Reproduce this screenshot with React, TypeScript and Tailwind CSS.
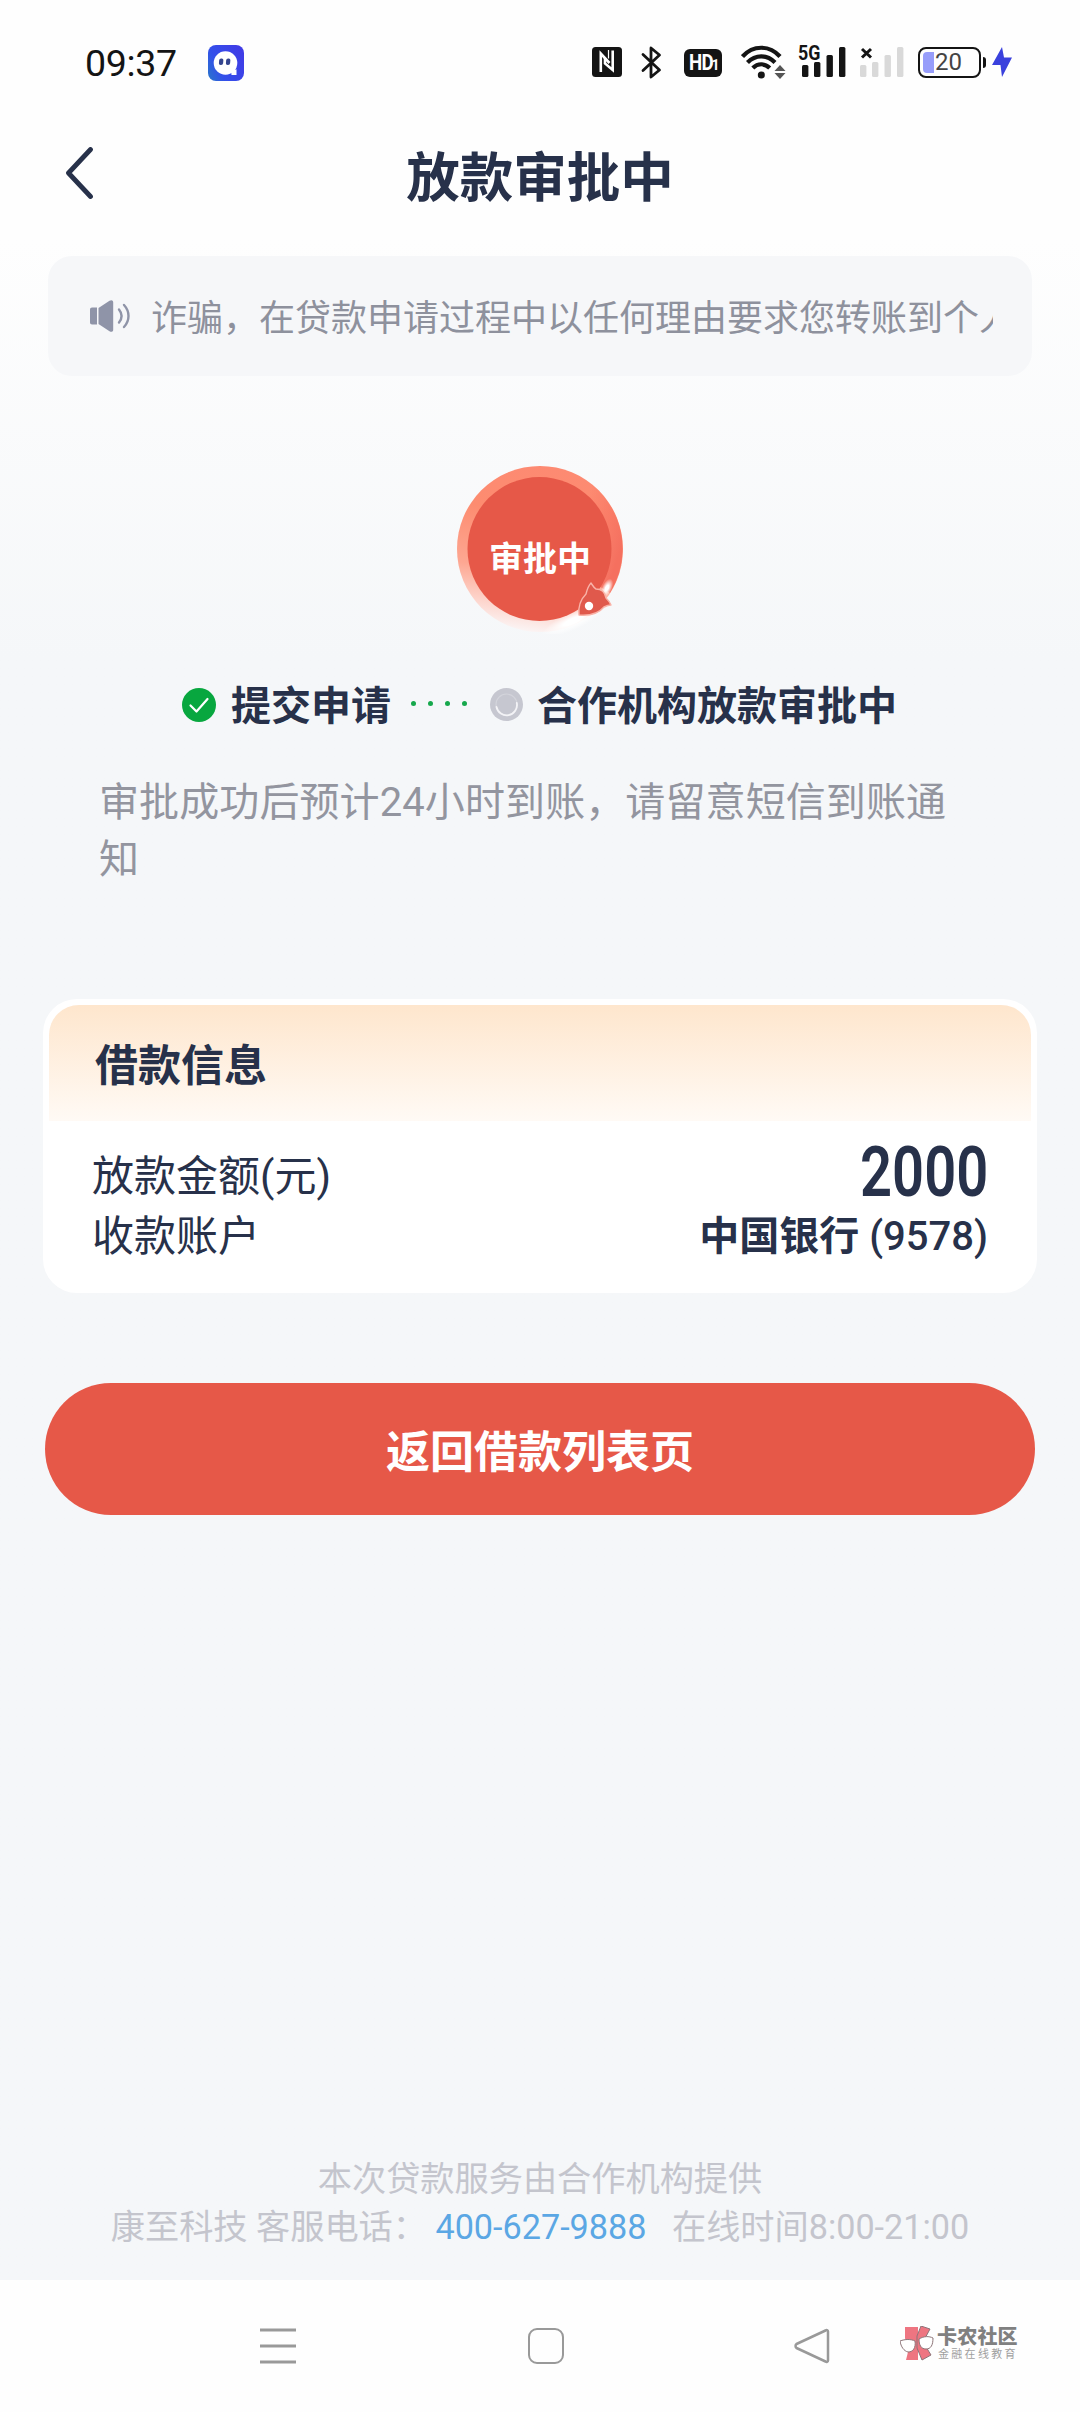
import type { ReactNode } from 'react';

const NOTICE = '诈骗，在贷款申请过程中以任何理由要求您转账到个人';

const SIGNAL_BARS = [
  { x: 0, y: 18, h: 12 },
  { x: 12, y: 15, h: 15 },
  { x: 24.5, y: 8, h: 22 },
  { x: 37, y: 0, h: 30 },
];

const STEP_DOTS = [0, 1, 2, 3];

function SignalBars({ color }: { color: string }) {
  return (
    <>
      {SIGNAL_BARS.map((bar) => (
        <rect key={bar.x} x={bar.x} y={bar.y} width="6.4" height={bar.h} rx="1.5" fill={color} />
      ))}
    </>
  );
}

function StatusBar() {
  return (
    <div className="flex h-[124px] shrink-0 items-center pl-[85px] text-[#141414]">
      <span className="w-[123px] pt-[2px] text-[37.500px] leading-[44px] tracking-[-0.3px]">09:37</span>
      <svg className="mt-[2px] h-9 w-9" viewBox="0 0 36 36">
        <defs>
          <linearGradient id="appIcon" x1="0" y1="0.8" x2="1" y2="0.3">
            <stop offset="0" stopColor="#2b6fd0" />
            <stop offset="0.3" stopColor="#3350ea" />
            <stop offset="1" stopColor="#403ce6" />
          </linearGradient>
        </defs>
        <rect width="36" height="36" rx="8" fill="url(#appIcon)" />
        <circle cx="17.500" cy="18" r="11.800" fill="#fff" />
        <path d="M23 25h3c1 0 1.500-.8 2.500-.8V30h-5z" fill="#fff" />
        <rect x="11" y="13.500" width="4.200" height="6.500" rx="1.800" fill="#35458f" transform="skewX(-5) translate(1.500 0)" />
        <rect x="18" y="13.500" width="4.200" height="6.500" rx="1.800" fill="#35458f" transform="skewX(-5) translate(1.500 0)" />
      </svg>

      {/* NFC */}
      <svg className="ml-[348px] h-[30px] w-[30px]" viewBox="0 0 30 30">
        <rect width="30" height="30" rx="3.500" fill="#141414" />
        <path d="M8.800 25V6.500L17.500 16" fill="none" stroke="#fff" strokeWidth="2.600" />
        <path d="M20.700 3.500V23L13 16.500V11" fill="none" stroke="#fff" strokeWidth="2.600" />
        <path d="M16.500 3v8.500" stroke="#fff" strokeWidth="1.200" />
      </svg>

      {/* bluetooth */}
      <svg className="ml-[19px] h-[33px] w-[21px]" viewBox="0 0 21 33" fill="none" stroke="#141414" strokeWidth="2.800" strokeLinejoin="round" strokeLinecap="round">
        <path d="M2 8.500L18.500 24L10 31V2L18.500 9L2 24.500" />
      </svg>

      <div className="mt-[2px] ml-[22px] flex h-7 w-[38px] items-baseline justify-center rounded-md bg-[#141414] text-white">
        <span className="text-[22px] leading-7 font-bold tracking-[-1px] [transform:scaleX(0.85)]">HD</span>
        <span className="-ml-[3px] text-[14px] leading-7 font-bold">1</span>
      </div>

      {/* wifi */}
      <svg className="ml-[19px] h-[34px] w-[45px]" viewBox="0 0 45 34">
        <g fill="none" stroke="#141414" strokeWidth="4.200">
          <path d="M1.500 11.500C12 -.2 28.500 -.2 39 11.500" />
          <path d="M6.500 17.500C14.500 9.300 26 9.300 34 17.500" />
          <path d="M11.800 23C16.800 18 23.700 18 28.700 23" />
        </g>
        <circle cx="20.300" cy="30" r="3.500" fill="#141414" />
        <path d="M39 20l5.500 6h-11z" fill="#555" />
        <path d="M39 34l5.500-6h-11z" fill="#555" />
      </svg>

      <div className="relative ml-[16px] h-[34px] w-[44px]">
        <svg className="absolute bottom-[2px] left-0 h-[30px] w-[44px]" viewBox="0 0 44 30">
          <SignalBars color="#141414" />
        </svg>
        <span className="absolute -top-[1px] -left-[4px] origin-left text-[21px] leading-[18px] font-bold [transform:scaleX(0.85)]">
          5G
        </span>
      </div>

      <svg className="ml-[14px] h-[30px] w-[44px]" viewBox="0 0 44 30">
        <SignalBars color="#d9d9d9" />
        <path d="M2 2l9 8.500M11 2l-9 8.500" stroke="#141414" strokeWidth="3" />
      </svg>

      <div className="ml-[14px] flex h-[31px] w-[63px] items-center rounded-[8px] border-[2.500px] border-[#141414] p-[3px]">
        <div className="h-full w-[11px] rounded-l-[4px] bg-[#979dfa]" />
        <span className="ml-[1px] text-[24px] leading-6 text-[#444]">20</span>
      </div>
      <div className="ml-[1.500px] h-[11px] w-[3px] rounded-r-sm bg-[#141414]" />
      <svg className="ml-[6px] h-[30px] w-5" viewBox="0 0 20 30">
        <path d="M10 0L0 18h8.500L10 30L20 10.500h-8z" fill="#3a41dd" />
      </svg>
    </div>
  );
}

function TitleBar() {
  return (
    <header className="flex h-[132px] shrink-0 justify-center text-[#27314a]">
      <svg className="mt-[23px] ml-[65px] h-[52px] w-[28px] shrink-0" viewBox="0 0 28 52" fill="none" stroke="#27314a" strokeWidth="4.800" strokeLinecap="round" strokeLinejoin="round">
        <path d="M25.500 2.500L3.500 26L25.500 49.500" />
      </svg>
      <h1 className="mt-[17px] mr-[93px] grow text-center text-[53.500px] leading-[76px] font-bold">放款审批中</h1>
    </header>
  );
}

function NoticeBar() {
  return (
    <div className="mx-12 flex h-[120px] shrink-0 items-center rounded-[24px] bg-[#f6f7f9] pr-[39px] pl-[42px]">
      <svg className="h-8 w-10 shrink-0" viewBox="0 0 40 32" fill="#8f94a8">
        <path d="M2 7.500h5v17H2c-1.200 0-2-.8-2-2v-13c0-1.200.8-2 2-2z" />
        <path d="M8.500 8L19.500.8c1.800-1.200 3.700-.6 3.700 1.500v27.400c0 2.100-1.900 2.700-3.700 1.500L8.500 24z" />
        <g fill="none" stroke="#8f94a8" strokeWidth="2.400" strokeLinecap="round">
          <path d="M29 9.500c3.200 4 3.200 9 0 13" />
          <path d="M34 5c6 6.500 6 15.500 0 22" />
        </g>
      </svg>
      <p className="ml-[21px] overflow-hidden pt-[6px] text-[36px] leading-[52px] whitespace-nowrap text-[#8e919d]">{NOTICE}</p>
    </div>
  );
}

function ApprovalBadge() {
  return (
    <div className="relative mt-[88px] h-[170px] w-[170px] shrink-0 self-center">
      <svg className="h-full w-full" viewBox="0 0 170 170">
        <defs>
          <linearGradient id="ring" x1="0.6" y1="0" x2="0.45" y2="1">
            <stop offset="0" stopColor="#fd8a72" />
            <stop offset="0.3" stopColor="#fd8c70" />
            <stop offset="0.65" stopColor="#fda792" />
            <stop offset="0.85" stopColor="#fdd3ca" />
            <stop offset="1" stopColor="#fbf4f4" />
          </linearGradient>
          <linearGradient id="ringRight" x1="0.2" y1="0.2" x2="1" y2="0.6">
            <stop offset="0.4" stopColor="#f86f5f" stopOpacity="0" />
            <stop offset="1" stopColor="#f5705f" />
          </linearGradient>
          <radialGradient id="glow">
            <stop offset="0.3" stopColor="#fff" />
            <stop offset="1" stopColor="#fff" stopOpacity="0" />
          </radialGradient>
        </defs>
        <circle cx="85" cy="85" r="83" fill="url(#ring)" />
        <path d="M85 2a83 83 0 0 1 70 127L85 85z" fill="url(#ringRight)" />
        <ellipse cx="118" cy="157" rx="34" ry="9" fill="url(#glow)" transform="rotate(-24 118 157)" />
        <circle cx="84.500" cy="85" r="72" fill="#e65848" />
        <ellipse cx="152" cy="124" rx="5" ry="10" fill="url(#glow)" transform="rotate(25 152 124)" />
        {/* rocket at the end of the ring */}
        <path
          d="M124 151c-1-9 1-15 7-21 1-4 2-8 5-11 2 3 3 5 5 6 5 0 9 3 10 9 2 2 4 4 5 7-3 0-5 1-7 2-5 6-13 9-25 8z"
          fill="#e0594c"
          stroke="#f9b3a8"
          strokeWidth="1.400"
          strokeLinejoin="round"
        />
        <circle cx="134" cy="142" r="4.200" fill="#fff" />
      </svg>
      <span className="absolute inset-x-0 top-[71px] text-center text-[34px] leading-[48px] font-bold text-white">审批中</span>
    </div>
  );
}

function Steps() {
  return (
    <div className="mt-[44px] ml-[182px] flex h-[58px] shrink-0 items-center text-[40px] leading-[58px] font-bold text-[#27314a]">
      <svg className="mb-[5px] h-[34px] w-[34px]" viewBox="0 0 34 34" fill="none">
        <circle cx="17" cy="17" r="17" fill="#08a73f" />
        <path d="M8.500 17.500l6 6L25.500 11" stroke="#fff" strokeWidth="2.200" strokeLinecap="round" strokeLinejoin="round" />
      </svg>
      <span className="ml-[15px]">提交申请</span>
      <span className="mb-[7px] ml-[20px] flex gap-3">
        {STEP_DOTS.map((dot) => (
          <i key={dot} className="h-[5px] w-[5px] rounded-full bg-[#16a84c]" />
        ))}
      </span>
      <svg className="mb-[5px] ml-[23px] h-[33px] w-[33px]" viewBox="0 0 33 33" fill="none">
        <circle cx="16.500" cy="16.500" r="16.500" fill="#c6c7d0" />
        <circle cx="16.500" cy="16.500" r="10.500" stroke="#d3d4db" strokeWidth="1.200" />
        <path d="M6.500 19a10.300 10.300 0 0 0 20.300-4" stroke="#f3f3f6" strokeWidth="1.800" strokeLinecap="round" />
      </svg>
      <span className="ml-[14px]">合作机构放款审批中</span>
    </div>
  );
}

function InfoRow({ label, children }: { label: string; children: ReactNode }) {
  return (
    <div className="flex h-[60px] items-center justify-between">
      <span className="text-[42px] leading-[60px]">{label}</span>
      {children}
    </div>
  );
}

function LoanCard() {
  return (
    <section className="mx-[43px] mt-[111px] h-[294px] shrink-0 rounded-[34px] bg-white p-[6px] text-[#27314a]">
      <h2 className="h-[116px] rounded-t-[30px] bg-linear-to-b from-[#fee6cd] to-[#fffaf5] pt-[31px] pl-[46px] text-[43px] leading-[60px] font-bold">
        借款信息
      </h2>
      <div className="pt-[26px] pr-[43px] pl-[43px]">
        <InfoRow label="放款金额(元)">
          <span className="mb-[10px] origin-right text-[71px] leading-[50px] font-semibold [transform:scaleX(0.79)]">2000</span>
        </InfoRow>
        <InfoRow label="收款账户">
          <span className="text-[40px] leading-[60px] font-medium">
            <b>中国银行</b> (9578)
          </span>
        </InfoRow>
      </div>
    </section>
  );
}

function Footer() {
  return (
    <footer className="mt-auto mb-[29px] text-center text-[34.200px] leading-[48px] text-[#c4c5cd]">
      <p>本次贷款服务由合作机构提供</p>
      <p className="whitespace-pre">
        康至科技 客服电话： <a className="text-[#5ba7e4]">400-627-9888</a>
        {'   '}在线时间8:00-21:00
      </p>
    </footer>
  );
}

function Watermark() {
  return (
    <div className="mb-[4px] ml-[70px] flex items-start gap-[3px]">
      <svg className="h-[35px] w-[34px]" viewBox="0 0 34 35" stroke="#8d7478" strokeWidth="1">
        <path d="M5 1h13v33H6l2-8-3-14z" fill="#ee7581" stroke="none" />
        <path d="M21 0l9 3-7 13 8 13-9 5-5-12V10z" fill="#ee7581" />
        <path d="M0 15c5-2 11-2 15 0 1 7-2 11-7 11-4-1-7-5-8-11z" fill="#fff" />
        <path d="M19 13c5-3 10-3 14-1 0 7-2 11-7 11-5 0-7-4-7-10z" fill="#fff" />
      </svg>
      <div className="text-[#808080]">
        <p className="text-[20px] leading-[22px] font-black tracking-[0.200px]">卡农社区</p>
        <p className="pl-[1px] text-[11px] leading-[14px] tracking-[2.300px] text-[#a0a0a0]">金融在线教育</p>
      </div>
    </div>
  );
}

function NavBar() {
  return (
    <nav className="flex h-[132px] shrink-0 items-center bg-[#fefefe] pb-[1px] pl-[260px]">
      <svg className="h-9 w-9" viewBox="0 0 36 36" stroke="#999" strokeWidth="3">
        <path d="M0 2h36M0 18h36M0 34h36" />
      </svg>
      <div className="ml-[232px] h-9 w-9 rounded-[9px] border-[2.500px] border-[#999]" />
      <svg className="ml-[230px] h-9 w-[36px]" viewBox="0 0 36 36" fill="none" stroke="#999" strokeWidth="2.500" strokeLinejoin="round">
        <path d="M31.500 2.500c1-.8 2.500-.3 2.500 1v29c0 1.300-1.500 1.800-2.500 1L2.500 20c-1.300-1-1.300-3 0-4z" />
      </svg>
      <Watermark />
    </nav>
  );
}

export default function App() {
  return (
    <div className="flex h-[2412px] w-[1080px] flex-col overflow-hidden bg-[#f5f7f9] font-['Roboto','Noto_Sans_CJK_SC',sans-serif]">
      <div className="flex min-h-0 grow flex-col bg-linear-to-b from-[#fefefe] from-[240px] to-[#f5f7f9] to-[660px]">
        <StatusBar />
        <TitleBar />
        <NoticeBar />
        <ApprovalBadge />
        <Steps />
        <p className="mt-[38px] mr-[120px] ml-[99px] shrink-0 text-[40px] leading-[57px] tracking-[0.100px] text-[#93959f]">
          审批成功后预计24小时到账，请留意短信到账通知
        </p>
        <LoanCard />
        <button className="mx-[45px] mt-[90px] h-[132px] shrink-0 rounded-full bg-[#e65848] pt-[7px] text-[44px] font-bold text-white">
          返回借款列表页
        </button>
        <Footer />
      </div>
      <NavBar />
    </div>
  );
}
